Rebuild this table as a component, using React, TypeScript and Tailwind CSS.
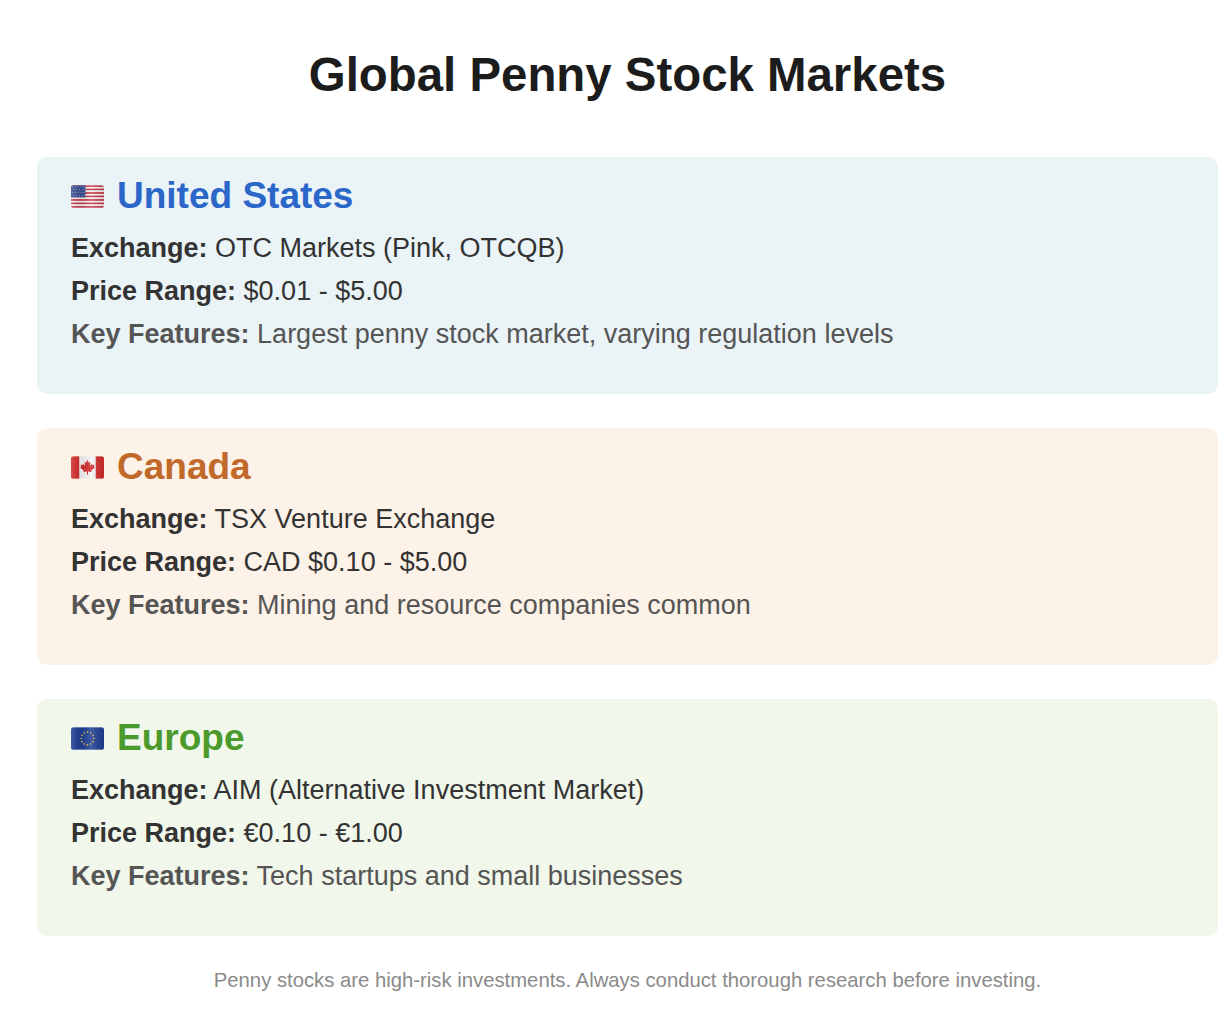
import React from 'react';

type Market = {
  name: string;
  flag: React.ReactNode;
  bg: string;
  color: string;
  exchange: string;
  range: string;
  features: string;
};

function Shade({ id }: { id: string }) {
  return (
    <defs>
      <linearGradient id={id} x1="0" y1="0" x2="1" y2="0">
        <stop offset="0" stopColor="#fff" stopOpacity="0.15" />
        <stop offset="0.3" stopColor="#000" stopOpacity="0.08" />
        <stop offset="0.6" stopColor="#fff" stopOpacity="0.15" />
        <stop offset="1" stopColor="#000" stopOpacity="0.1" />
      </linearGradient>
      <clipPath id={`${id}-clip`}>
        <rect x="0" y="0" width="32" height="22" rx="2.5" />
      </clipPath>
    </defs>
  );
}

function UsFlag() {
  const stripes = Array.from({ length: 13 }, (_, i) => i);
  return (
    <svg width="33" height="23" viewBox="0 0 32 22" aria-hidden>
      <Shade id="us" />
      <g clipPath="url(#us-clip)">
        {stripes.map((i) => (
          <rect key={i} x="0" y={(i * 22) / 13} width="32" height={22 / 13 + 0.05} fill={i % 2 === 0 ? '#c8303c' : '#f4f4f4'} />
        ))}
        <rect x="0" y="0" width="14" height="11.85" fill="#3c4f93" />
        {Array.from({ length: 20 }, (_, i) => (
          <circle key={i} cx={1.6 + (i % 5) * 2.7 + (Math.floor(i / 5) % 2) * 1.3} cy={1.5 + Math.floor(i / 5) * 2.8} r="0.45" fill="#dfe3f0" />
        ))}
        <rect x="0" y="0" width="32" height="22" fill="url(#us)" />
      </g>
    </svg>
  );
}

function CaFlag() {
  return (
    <svg width="33" height="23" viewBox="0 0 32 22" aria-hidden>
      <Shade id="ca" />
      <g clipPath="url(#ca-clip)">
        <rect x="0" y="0" width="32" height="22" fill="#f6f6f6" />
        <rect x="0" y="0" width="8" height="22" fill="#d52b2b" />
        <rect x="24" y="0" width="8" height="22" fill="#d52b2b" />
        <polygon
          fill="#d52b2b"
          points="16,3.5 17.4,6.3 18.9,5.6 18.3,9.2 20.4,7.4 20.9,8.7 22.8,8.3 22.2,10.6 23.2,11.1 19.6,14 20.1,15.3 16.5,14.8 16.5,18 15.5,18 15.5,14.8 11.9,15.3 12.4,14 8.8,11.1 9.8,10.6 9.2,8.3 11.1,8.7 11.6,7.4 13.7,9.2 13.1,5.6 14.6,6.3"
        />
        <rect x="0" y="0" width="32" height="22" fill="url(#ca)" />
      </g>
    </svg>
  );
}

function EuFlag() {
  const stars = Array.from({ length: 12 }, (_, i) => i);
  return (
    <svg width="33" height="23" viewBox="0 0 32 22" aria-hidden>
      <Shade id="eu" />
      <g clipPath="url(#eu-clip)">
        <rect x="0" y="0" width="32" height="22" fill="#1f3f95" />
        {stars.map((i) => {
          const a = (i * Math.PI) / 6;
          return <circle key={i} cx={16 + Math.cos(a) * 6.2} cy={11 + Math.sin(a) * 6.2} r="0.8" fill="#f2c530" />;
        })}
        <rect x="0" y="0" width="32" height="22" fill="url(#eu)" />
      </g>
    </svg>
  );
}

const markets: Market[] = [
  {
    name: 'United States',
    flag: <UsFlag />,
    bg: 'bg-[#eaf3f6]',
    color: 'text-[#2b66c9]',
    exchange: 'OTC Markets (Pink, OTCQB)',
    range: '$0.01 - $5.00',
    features: 'Largest penny stock market, varying regulation levels',
  },
  {
    name: 'Canada',
    flag: <CaFlag />,
    bg: 'bg-[#fdf2e7]',
    color: 'text-[#c1692b]',
    exchange: 'TSX Venture Exchange',
    range: 'CAD $0.10 - $5.00',
    features: 'Mining and resource companies common',
  },
  {
    name: 'Europe',
    flag: <EuFlag />,
    bg: 'bg-[#f1f7ea]',
    color: 'text-[#4b9a2c]',
    exchange: 'AIM (Alternative Investment Market)',
    range: '€0.10 - €1.00',
    features: 'Tech startups and small businesses',
  },
];

function MarketCard({ market }: { market: Market }) {
  return (
    <div className={`${market.bg} rounded-[10px] pt-[18px] pb-[38px] px-[34px]`}>
      <h2 className={`flex items-center h-[42px] text-[37px] font-bold leading-[42px] ${market.color}`}>
        <span className="mr-[13px] flex items-center">{market.flag}</span>
        {market.name}
      </h2>
      <div className="mt-[10px] text-[27px] leading-[43px]">
        <p className="text-[#333]">
          <b>Exchange:</b> {market.exchange}
        </p>
        <p className="text-[#333]">
          <b>Price Range:</b> {market.range}
        </p>
        <p className="text-[#555]">
          <b>Key Features:</b> {market.features}
        </p>
      </div>
    </div>
  );
}

export default function App() {
  return (
    <div className="min-h-[1025px] bg-white overflow-hidden pl-[37px] font-['Liberation_Sans',Arial,sans-serif]">
      <div className="w-[1181px]">
        <h1 className="pt-[48px] text-center text-[47.4px] font-bold leading-[54px] text-[#1c1c1c]">
          Global Penny Stock Markets
        </h1>
        <div className="mt-[55px] flex flex-col gap-[34px]">
          {markets.map((m) => (
            <MarketCard key={m.name} market={m} />
          ))}
        </div>
        <p className="mt-[32px] text-center text-[20.3px] leading-[24px] text-[#8a8a8a]">
          Penny stocks are high-risk investments. Always conduct thorough research before investing.
        </p>
      </div>
    </div>
  );
}
